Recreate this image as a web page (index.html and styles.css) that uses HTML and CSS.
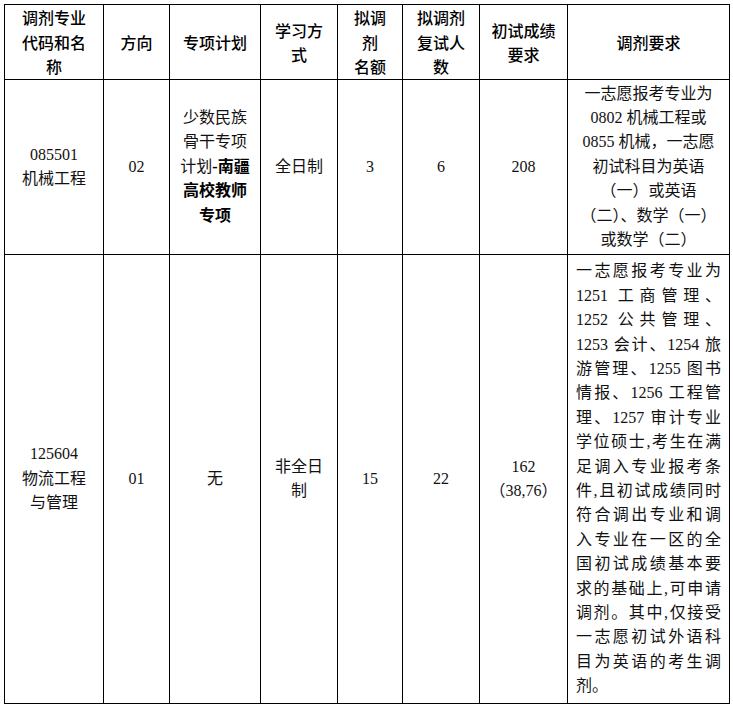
FILE: index.html
```html
<!DOCTYPE html>
<html lang="zh-CN">
<head>
<meta charset="utf-8">
<title>调剂专业</title>
<link rel="stylesheet" href="styles.css">
</head>
<body>
<table class="tbl">
  <colgroup>
    <col class="c1"><col class="c2"><col class="c3"><col class="c4"><col class="c5"><col class="c6"><col class="c7"><col class="c8">
  </colgroup>
  <thead>
    <tr class="head">
      <th><span class="ln">调剂专业</span><span class="ln">代码和名</span><span class="ln">称</span></th>
      <th>方向</th>
      <th>专项计划</th>
      <th><span class="ln">学习方</span><span class="ln">式</span></th>
      <th><span class="ln">拟调</span><span class="ln">剂</span><span class="ln">名额</span></th>
      <th><span class="ln">拟调剂</span><span class="ln">复试人</span><span class="ln">数</span></th>
      <th><span class="ln">初试成绩</span><span class="ln">要求</span></th>
      <th>调剂要求</th>
    </tr>
  </thead>
  <tbody>
    <tr class="r1">
      <td><span class="ln">085501</span><span class="ln">机械工程</span></td>
      <td>02</td>
      <td><span class="ln">少数民族</span><span class="ln">骨干专项</span><span class="ln">计划<b>-南疆</b></span><span class="ln"><b>高校教师</b></span><span class="ln"><b>专项</b></span></td>
      <td>全日制</td>
      <td>3</td>
      <td>6</td>
      <td>208</td>
      <td class="req"><span class="ln">一志愿报考专业为</span><span class="ln">0802 机械工程或</span><span class="ln">0855 机械，一志愿</span><span class="ln">初试科目为英语</span><span class="ln">（一）或英语</span><span class="ln">（二）、数学（一）</span><span class="ln">或数学（二）</span></td>
    </tr>
    <tr class="r2">
      <td><span class="ln">125604</span><span class="ln">物流工程</span><span class="ln">与管理</span></td>
      <td>01</td>
      <td>无</td>
      <td><span class="ln">非全日</span><span class="ln">制</span></td>
      <td>15</td>
      <td>22</td>
      <td><span class="ln">162</span><span class="ln">（38,76）</span></td>
      <td class="req just"><span class="ln">一志愿报考专业为</span><span class="ln">1251 工商管理、</span><span class="ln">1252 公共管理、</span><span class="ln">1253 会计、1254 旅</span><span class="ln">游管理、1255 图书</span><span class="ln">情报、1256 工程管</span><span class="ln">理、1257 审计专业</span><span class="ln">学位硕士,考生在满</span><span class="ln">足调入专业报考条</span><span class="ln">件,且初试成绩同时</span><span class="ln">符合调出专业和调</span><span class="ln">入专业在一区的全</span><span class="ln">国初试成绩基本要</span><span class="ln">求的基础上,可申请</span><span class="ln">调剂。其中,仅接受</span><span class="ln">一志愿初试外语科</span><span class="ln">目为英语的考生调</span><span class="ln last">剂。</span></td>
    </tr>
  </tbody>
</table>
</body>
</html>
```

FILE: styles.css
```css
html, body {
  margin: 0;
  padding: 0;
  background: #ffffff;
}
body {
  padding: 4px 0 0 4px;
}
.tbl {
  border-collapse: collapse;
  table-layout: fixed;
  width: 725px;
  font-family: "Liberation Serif", "Noto Sans CJK SC", serif;
  font-size: 16px;
  line-height: 24.4px;
  color: #111;
}
.c1 { width: 99px; }
.c2 { width: 66px; }
.c3 { width: 91px; }
.c4 { width: 77px; }
.c5 { width: 65px; }
.c6 { width: 77px; }
.c7 { width: 88px; }
.c8 { width: 162px; }
.tbl th, .tbl td {
  border: 1px solid #000;
  padding: 0 8px;
  text-align: center;
  vertical-align: middle;
  white-space: nowrap;
}
.tbl th {
  font-family: "Noto Sans CJK SC", sans-serif;
  font-weight: 500;
  color: #000;
}
.head { height: 75px; }
.r1 { height: 175px; }
.r2 { height: 449px; }
.ln { display: block; }
.tbl b { font-weight: 700; color: #000; }
.req { padding: 0 8px; }
.just { vertical-align: top; padding-top: 2px; }
.just .ln {
  text-align: justify;
  text-align-last: justify;
}
.just .ln.last {
  text-align: left;
  text-align-last: left;
}
```
